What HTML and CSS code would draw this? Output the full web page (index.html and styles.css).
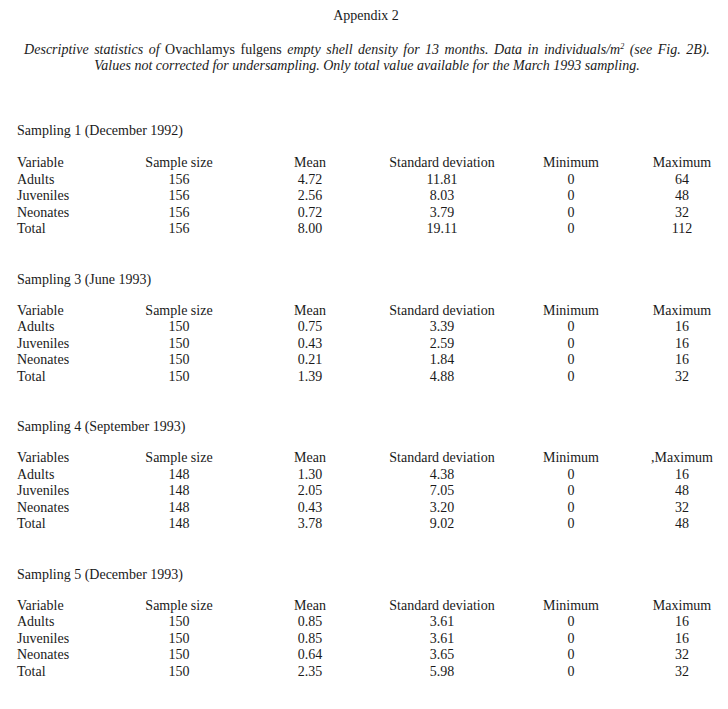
FILE: index.html
```html
<!DOCTYPE html>
<html>
<head>
<meta charset="utf-8">
<link rel="stylesheet" href="styles.css">
</head>
<body>
<div class="page">
  <div class="heading">Appendix 2</div>
  <p class="caption"><span class="wide"><i>Descriptive statistics of</i> Ovachlamys fulgens <i>empty shell density for 13 months. Data in individuals/m<sup>2</sup> (see Fig. 2B).</i></span><br><i>Values not corrected for undersampling. Only total value available for the March 1993 sampling.</i></p>

  <section class="sampling s1">
    <div class="stitle">Sampling 1 (December 1992)</div>
    <div class="table">
      <div class="c var">Variable</div><div class="c">Sample size</div><div class="c">Mean</div><div class="c">Standard deviation</div><div class="c">Minimum</div><div class="c">Maximum</div>
      <div class="c var">Adults</div><div class="c">156</div><div class="c">4.72</div><div class="c">11.81</div><div class="c">0</div><div class="c">64</div>
      <div class="c var">Juveniles</div><div class="c">156</div><div class="c">2.56</div><div class="c">8.03</div><div class="c">0</div><div class="c">48</div>
      <div class="c var">Neonates</div><div class="c">156</div><div class="c">0.72</div><div class="c">3.79</div><div class="c">0</div><div class="c">32</div>
      <div class="c var">Total</div><div class="c">156</div><div class="c">8.00</div><div class="c">19.11</div><div class="c">0</div><div class="c">112</div>
    </div>
  </section>

  <section class="sampling s3">
    <div class="stitle">Sampling 3 (June 1993)</div>
    <div class="table">
      <div class="c var">Variable</div><div class="c">Sample size</div><div class="c">Mean</div><div class="c">Standard deviation</div><div class="c">Minimum</div><div class="c">Maximum</div>
      <div class="c var">Adults</div><div class="c">150</div><div class="c">0.75</div><div class="c">3.39</div><div class="c">0</div><div class="c">16</div>
      <div class="c var">Juveniles</div><div class="c">150</div><div class="c">0.43</div><div class="c">2.59</div><div class="c">0</div><div class="c">16</div>
      <div class="c var">Neonates</div><div class="c">150</div><div class="c">0.21</div><div class="c">1.84</div><div class="c">0</div><div class="c">16</div>
      <div class="c var">Total</div><div class="c">150</div><div class="c">1.39</div><div class="c">4.88</div><div class="c">0</div><div class="c">32</div>
    </div>
  </section>

  <section class="sampling s4">
    <div class="stitle">Sampling 4 (September 1993)</div>
    <div class="table">
      <div class="c var">Variables</div><div class="c">Sample size</div><div class="c">Mean</div><div class="c">Standard deviation</div><div class="c">Minimum</div><div class="c">,Maximum</div>
      <div class="c var">Adults</div><div class="c">148</div><div class="c">1.30</div><div class="c">4.38</div><div class="c">0</div><div class="c">16</div>
      <div class="c var">Juveniles</div><div class="c">148</div><div class="c">2.05</div><div class="c">7.05</div><div class="c">0</div><div class="c">48</div>
      <div class="c var">Neonates</div><div class="c">148</div><div class="c">0.43</div><div class="c">3.20</div><div class="c">0</div><div class="c">32</div>
      <div class="c var">Total</div><div class="c">148</div><div class="c">3.78</div><div class="c">9.02</div><div class="c">0</div><div class="c">48</div>
    </div>
  </section>

  <section class="sampling s5">
    <div class="stitle">Sampling 5 (December 1993)</div>
    <div class="table">
      <div class="c var">Variable</div><div class="c">Sample size</div><div class="c">Mean</div><div class="c">Standard deviation</div><div class="c">Minimum</div><div class="c">Maximum</div>
      <div class="c var">Adults</div><div class="c">150</div><div class="c">0.85</div><div class="c">3.61</div><div class="c">0</div><div class="c">16</div>
      <div class="c var">Juveniles</div><div class="c">150</div><div class="c">0.85</div><div class="c">3.61</div><div class="c">0</div><div class="c">16</div>
      <div class="c var">Neonates</div><div class="c">150</div><div class="c">0.64</div><div class="c">3.65</div><div class="c">0</div><div class="c">32</div>
      <div class="c var">Total</div><div class="c">150</div><div class="c">2.35</div><div class="c">5.98</div><div class="c">0</div><div class="c">32</div>
    </div>
  </section>
</div>
</body>
</html>
```

FILE: styles.css
```css
html, body {
  margin: 0;
  padding: 0;
  background: #ffffff;
}
body {
  font-family: "Liberation Serif", "Times New Roman", serif;
  font-size: 14px;
  line-height: 16px;
  color: #1a1a1a;
  width: 728px;
  height: 709px;
  overflow: hidden;
}
.page {
  padding: 8px 0 0 17px;
}
.heading {
  text-align: center;
  margin-left: -17px;
  padding-left: 4px;
}
.caption {
  margin: 18px 0 0 -17px;
  padding-left: 6px;
  text-align: center;
}
.caption .wide {
  word-spacing: 2px;
}
.caption sup {
  font-size: 8px;
  line-height: 0;
  vertical-align: 5px;
}
.sampling {
  margin-top: 34px;
}
.sampling .stitle {
  margin-bottom: 15px;
}
.s1 {
  margin-top: 49px;
}
.s1 .stitle {
  margin-bottom: 16px;
}
.s4 {
  margin-top: 34px;
}
.s5 {
  margin-top: 34px;
}
.table {
  display: grid;
  grid-template-columns: 103px 118px 144px 120px 138px 84px;
  line-height: 16.5px;
}
.c {
  text-align: center;
  white-space: nowrap;
}
.c.var {
  text-align: left;
}
```
